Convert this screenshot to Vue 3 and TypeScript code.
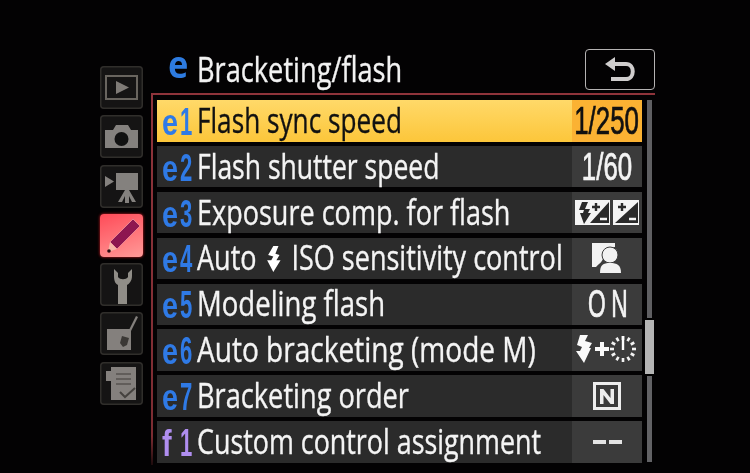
<script setup lang="ts">
interface Row { code: string; num: string; label: string; sx: number; value?: string; icon?: string; flash?: boolean; tail?: string; purple?: boolean }
const rows: Row[] = [
  { code: 'e', num: '1', label: 'Flash sync speed', sx: 0.77, value: '1/250' },
  { code: 'e', num: '2', label: 'Flash shutter speed', sx: 0.78, value: '1/60' },
  { code: 'e', num: '3', label: 'Exposure comp. for flash', sx: 0.795, icon: 'comp' },
  { code: 'e', num: '4', label: 'Auto', sx: 0.795, flash: true, tail: 'ISO sensitivity control', icon: 'person' },
  { code: 'e', num: '5', label: 'Modeling flash', sx: 0.81, value: 'ON' },
  { code: 'e', num: '6', label: 'Auto bracketing (mode M)', sx: 0.825, icon: 'flashTimer' },
  { code: 'e', num: '7', label: 'Bracketing order', sx: 0.80, icon: 'n' },
  { code: 'f', num: '1', label: 'Custom control assignment', sx: 0.79, value: '--', purple: true },
]
const ticks = Array.from({ length: 12 }, (_, i) => i * 30)
const tabs = ['play', 'camera', 'movie', 'pencil', 'wrench', 'retouch', 'recent']
</script>

<template>
  <div class="screen">
    <nav class="tabs">
      <div v-for="t in tabs" :key="t" class="tab" :class="{ active: t === 'pencil' }">
        <svg viewBox="0 0 43 43" width="43" height="43">
          <g v-if="t === 'play'">
            <rect x="6" y="10" width="31" height="23" fill="none" stroke="#69655f" stroke-width="2" />
            <path d="M16 15 L29 21.5 L16 28 Z" fill="#7f7b77" />
          </g>
          <g v-else-if="t === 'camera'">
            <path d="M5 15 H13 L16 10 H28 L31 15 H38 V33 H5 Z" fill="#84817e" />
            <circle cx="21.5" cy="24" r="7" fill="#111" />
          </g>
          <g v-else-if="t === 'movie'">
            <path d="M5 11 L14 16.5 L5 22 Z" fill="#84817e" />
            <rect x="16" y="8" width="22" height="17" fill="#84817e" />
            <path d="M25 25 H29 L36 37 H32 L29 31 V38 H25 V31 L22 37 H18 Z" fill="#84817e" />
          </g>
          <g v-else-if="t === 'pencil'">
            <path d="M33 5 L40 12 L17 35 L10 28 Z" fill="#8d1650" stroke="#e8838f" stroke-width="1" />
            <path d="M10 28 L17 35 L8 38 Z" fill="#f7b7a8" />
            <circle cx="9" cy="37" r="1.8" fill="#2a0a10" />
          </g>
          <g v-else-if="t === 'wrench'">
            <path d="M14 6 V13 C14 19 16 21 18 22 V41 H27 V22 C29 21 32 18 32 13 V6 L28 10 V14 C26 17 20 17 18 14 V10 Z" fill="#908d87" />
          </g>
          <g v-else-if="t === 'retouch'">
            <rect x="7" y="17" width="24" height="21" fill="#84807d" />
            <path d="M36 4 L38 5 L28 25 L26 24 Z" fill="#84807d" />
            <path d="M22 24 L29 26 L27 33 L23 35 L20 31 Z" fill="#3b3835" />
          </g>
          <g v-else>
            <rect x="6" y="9" width="8" height="10" fill="#84807d" />
            <rect x="11" y="5" width="25" height="33" fill="#84807d" />
            <path d="M16 12 H31 M16 17 H31 M16 22 H31" stroke="#55524f" stroke-width="1.5" />
            <path d="M20 30 L25 35 L35 26" fill="none" stroke="#45423f" stroke-width="2" />
          </g>
        </svg>
      </div>
    </nav>

    <main class="main">
      <header class="head">
        <span class="head-e">e</span>
        <span class="squeeze head-title">Bracketing/flash</span>
        <div class="back">
          <svg viewBox="0 0 36 26" width="36" height="26">
            <path d="M10 7 H24 C33 7 33 22 24 22 H9" fill="none" stroke="#cfcdcd" stroke-width="4" />
            <path d="M13 0 V14 L3 7 Z" fill="#cfcdcd" />
          </svg>
        </div>
      </header>

      <section class="panel">
        <div class="rows">
          <div v-for="(r, i) in rows" :key="i" class="row" :class="{ sel: i === 0 }">
            <div class="cell">
              <span class="code" :class="{ purple: r.purple }"><span class="c1">{{ r.code }}</span><span class="c2">{{ r.num }}</span></span>
              <span class="squeeze label" :style="{ transform: `scaleX(${r.sx})` }">
                {{ r.label }}
                <svg v-if="r.flash" class="inline-flash" viewBox="0 0 14 20" width="20" height="26">
                  <path d="M7 0 H12 L9 6 L13 7 L10 11 H14 L7 20 L1 11 H5 L7 8 L2 7 Z" fill="#fff" />
                </svg>
                <template v-if="r.tail">{{ r.tail }}</template>
              </span>
            </div>
            <div class="val">
              <span v-if="r.value === 'ON'" class="on">ON</span>
              <span v-else-if="r.value === '--'" class="dash"><i></i><i></i></span>
              <span v-else-if="r.value" class="value">{{ r.value }}</span>
              <svg v-else-if="r.icon === 'comp'" viewBox="0 0 64 25" width="64" height="25">
                <path d="M0 0 H35 V25 H0 Z M38 0 H64 V25 H38 Z" fill="#f4f4f4" />
                <path d="M7 2 H13 L10 9 H15 L13 13 H16 L9 24 L5 13 H8 L9 10 H4 Z" fill="#2a2a2a" />
                <path d="M34 2 L15 23 H34 Z M63 2 L40 23 H63 Z" fill="#2a2a2a" />
                <path d="M17 7 H25 M21 3 V11 M43 7 H51 M47 3 V11" stroke="#2a2a2a" stroke-width="2.4" />
                <path d="M25 19 H32 M54 19 H61" stroke="#f4f4f4" stroke-width="2.4" />
              </svg>
              <svg v-else-if="r.icon === 'person'" viewBox="0 0 30 30" width="30" height="30">
                <path d="M0 0 H23 V4 C14 4 10 10 11 15 C11 18 8 20 4 24 H0 Z" fill="#f2f2f2" />
                <circle cx="18" cy="12" r="8" fill="#f2f2f2" stroke="#3c3c3c" stroke-width="1" />
                <path d="M8 30 C8 22 11 20 18 20 C25 20 29 22 29 30 Z" fill="#f2f2f2" />
              </svg>
              <svg v-else-if="r.icon === 'flashTimer'" viewBox="0 0 62 30" width="62" height="30">
                <path d="M4 0 H12 L9 6 L16 8 L13 13 H15 L8 28 L0 16 H4 L6 12 L1 10 Z" fill="#fafafa" />
                <path d="M19 14 H33 M26 7 V21" stroke="#fafafa" stroke-width="4" />
                <g transform="translate(47 14)">
                  <rect v-for="a in ticks" :key="a" x="-1.3" y="-13" width="2.6" height="4" fill="#f2f2f2" :transform="`rotate(${a})`" />
                  <rect x="-1.2" y="-13" width="2.4" height="14" fill="#fff" />
                </g>
              </svg>
              <svg v-else-if="r.icon === 'n'" viewBox="0 0 28 28" width="28" height="28">
                <rect x="1.5" y="1.5" width="25" height="25" fill="none" stroke="#eee" stroke-width="3" />
                <path d="M7 22 V7 H10.5 L17.5 16 V7 H21 V22 H17.5 L10.5 13 V22 Z" fill="#eee" />
              </svg>
            </div>
          </div>
        </div>
        <div class="scroll"><div class="thumb"></div></div>
      </section>
    </main>
  </div>
</template>

<style>
html, body { margin: 0; background: #030203; }
</style>

<style scoped>
.screen {
  width: 750px;
  height: 473px;
  box-sizing: border-box;
  display: flex;
  padding-left: 100px;
  overflow: hidden;
  background: #030203;
  font-family: "Open Sans", "Noto Sans", sans-serif;
  filter: blur(0.55px);
}
.tabs {
  width: 43px;
  margin-top: 66px;
  display: flex;
  flex-direction: column;
  gap: 6.3px;
}
.tab {
  width: 43px;
  height: 43px;
  box-sizing: border-box;
  border-radius: 4px;
  background: #151414;
  box-shadow: inset 0 0 0 1.5px #302e2b;
  display: block;
}
.tab svg { display: block; }
.tab.active {
  background: linear-gradient(160deg, #ff4b58, #ff9a98);
  box-shadow: 0 0 3px #e0202a;
}
.main {
  width: 504px;
  margin-left: 8px;
  display: flex;
  flex-direction: column;
}
.head {
  height: 93px;
  position: relative;
  flex: none;
}
.head-e {
  position: absolute;
  left: 17px;
  top: 43px;
  font-family: "Noto Sans", sans-serif;
  font-weight: 700;
  font-size: 38px;
  line-height: 40px;
  color: #2d7be0;
  transform: scaleX(0.9);
  transform-origin: left center;
}
.squeeze {
  display: inline-block;
  white-space: nowrap;
  transform-origin: left center;
  -webkit-text-stroke: 0.35px currentColor;
}
.head-title {
  position: absolute;
  left: 46px;
  top: 49px;
  font-size: 34px;
  line-height: 40px;
  color: #f2f2f2;
  transform: scaleX(0.8);
}
.back {
  position: absolute;
  left: 434px;
  top: 49px;
  width: 70px;
  height: 41px;
  box-sizing: border-box;
  border: 1.5px solid #b5b3b3;
  border-radius: 4px;
  display: flex;
  align-items: center;
  justify-content: center;
}
.panel {
  display: flex;
  gap: 5px;
  height: 372px;
  box-sizing: border-box;
  padding: 5px 0 0 4px;
  border-top: 2px solid #7b2f35;
  border-left: 2px solid #8a3138;
  border-image: linear-gradient(to bottom, #8f343b 0%, #7c2c32 92%, #1a0a0b 100%) 1;
}
.rows {
  width: 485px;
  display: flex;
  flex-direction: column;
  gap: 4.3px;
}
.row {
  height: 41.6px;
  display: flex;
  background: #2b2b2b;
  color: #f4f4f4;
}
.row.sel {
  background: linear-gradient(to bottom, #ffd969, #fcc63a);
  color: #111;
}
.cell {
  flex: 1;
  display: flex;
  align-items: center;
  min-width: 0;
}
.code {
  width: 40px;
  flex: none;
  padding-left: 5px;
  margin-top: 2px;
  box-sizing: border-box;
  color: #2f7ae6;
  font-family: "Liberation Sans", sans-serif;
  font-weight: 700;
  display: flex;
  align-items: baseline;
}
.code.purple { color: #b08ef0; }
.c1 {
  display: inline-block;
  font-size: 37px;
  line-height: 40px;
  width: 18px;
  transform: scaleX(0.78);
  transform-origin: left;
}
.c2 {
  display: inline-block;
  font-size: 39.5px;
  line-height: 40px;
  width: 15px;
  transform: scaleX(0.56);
  transform-origin: left;
}
.label {
  font-size: 34px;
  line-height: 40px;
  margin-top: -2px;
}
.inline-flash { vertical-align: -2px; margin: 0 13px 0 2px; }
.val {
  width: 70px;
  flex: none;
  display: flex;
  align-items: center;
  justify-content: center;
  background: #3b3b3b;
}
.sel .val { background: #fbb233; }
.value, .on {
  display: inline-block;
  white-space: nowrap;
  font-family: "Liberation Sans", sans-serif;
  font-size: 38px;
  line-height: 40px;
  transform: scaleX(0.68);
  transform-origin: center;
  -webkit-text-stroke: 0.7px currentColor;
}
.on {
  letter-spacing: 9px;
  margin-left: 6px;
  transform: scaleX(0.6);
}
.dash { display: flex; gap: 3px; }
.dash i { width: 13px; height: 4px; background: #e4e4e4; display: block; }
.scroll {
  width: 5px;
  height: 362px;
  background: linear-gradient(to bottom, #5f5f62 0 218px, #000 218px 220px, #6c6c6c 220px 274px, #000 274px 276px, #626265 276px);
  position: relative;
}
.thumb {
  position: absolute;
  left: -2px;
  top: 220px;
  width: 9px;
  height: 54px;
  background: #b4b4b4;
}
</style>
